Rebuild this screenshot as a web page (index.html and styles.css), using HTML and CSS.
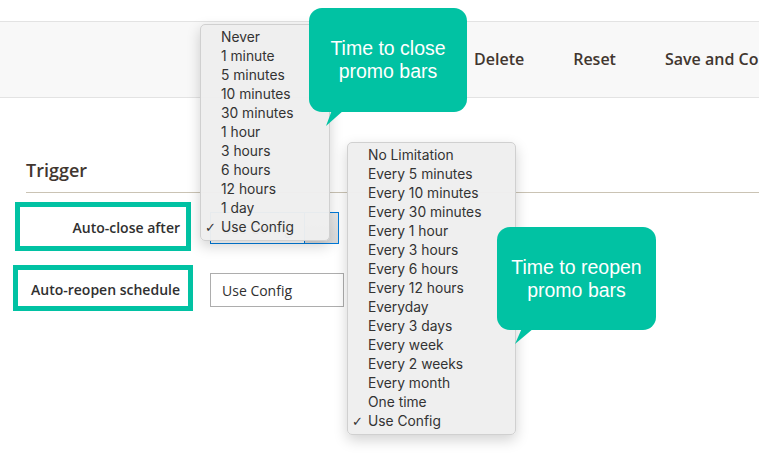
FILE: index.html
```html
<!DOCTYPE html>
<html lang="en">
<head>
<meta charset="utf-8">
<title>Trigger settings</title>
<link rel="stylesheet" href="styles.css">
</head>
<body>
<div class="page">
  <div class="toolbar">
    <span class="tb-btn">Delete</span>
    <span class="tb-btn">Reset</span>
    <span class="tb-btn">Save and Continue Edit</span>
  </div>

  <div class="section">
    <h2 class="legend">Trigger</h2>
    <div class="field field-close">
      <div class="label label-close">Auto-close after</div>
      <div class="select select-focus">
        <span class="select-value">Use Config</span>
        <span class="select-arrow"></span>
      </div>
    </div>
    <div class="field field-reopen">
      <div class="label label-reopen">Auto-reopen schedule</div>
      <div class="select select-plain">
        <span class="select-value">Use Config</span>
      </div>
    </div>
  </div>

  <ul class="menu menu-close">
    <li>Never</li>
    <li>1 minute</li>
    <li>5 minutes</li>
    <li>10 minutes</li>
    <li>30 minutes</li>
    <li>1 hour</li>
    <li>3 hours</li>
    <li>6 hours</li>
    <li>12 hours</li>
    <li>1 day</li>
    <li class="checked">Use Config</li>
  </ul>

  <ul class="menu menu-reopen">
    <li>No Limitation</li>
    <li>Every 5 minutes</li>
    <li>Every 10 minutes</li>
    <li>Every 30 minutes</li>
    <li>Every 1 hour</li>
    <li>Every 3 hours</li>
    <li>Every 6 hours</li>
    <li>Every 12 hours</li>
    <li>Everyday</li>
    <li>Every 3 days</li>
    <li>Every week</li>
    <li>Every 2 weeks</li>
    <li>Every month</li>
    <li>One time</li>
    <li class="checked">Use Config</li>
  </ul>

  <div class="bubble bubble-close">
    <span>Time to close<br>promo bars</span>
    <svg class="tail tail-close" width="40" height="30" viewBox="0 0 40 30"><polygon points="6,0 18,0 0,16"/></svg>
  </div>

  <div class="bubble bubble-reopen">
    <span>Time to reopen<br>promo bars</span>
    <svg class="tail tail-reopen" width="40" height="30" viewBox="0 0 40 30"><polygon points="7,0 19,0 0,16"/></svg>
  </div>
</div>
</body>
</html>
```
FILE: styles.css
```css
* { box-sizing: border-box; }

html, body {
  margin: 0;
  padding: 0;
  background: #ffffff;
}

body {
  font-family: "Open Sans", "Liberation Sans", sans-serif;
  color: #303030;
  width: 759px;
  height: 454px;
  overflow: hidden;
}

.page {
  position: relative;
  width: 759px;
  height: 454px;
  padding-top: 21px;
}

.toolbar {
  height: 77px;
  background: #f8f8f8;
  border-top: 1px solid #e3e3e3;
  border-bottom: 1px solid #e3e3e3;
  display: flex;
  align-items: center;
  gap: 49px;
  padding-left: 474px;
  padding-bottom: 2px;
  white-space: nowrap;
  overflow: hidden;
}

.tb-btn {
  font-size: 16px;
  font-weight: 600;
  color: #41362f;
}

.section {
  padding-top: 60px;
}

.legend {
  margin: 0 0 0 26px;
  font-size: 18px;
  font-weight: 600;
  line-height: 24px;
  color: #41362f;
  padding-bottom: 10px;
  border-bottom: 1px solid #cac3b4;
}

.field {
  display: flex;
  align-items: center;
}

.field-close {
  margin-top: 9px;
}

.field-reopen {
  margin-top: 14px;
}

.label {
  border: 5px solid #01c2a3;
  font-size: 14px;
  font-weight: 600;
  color: #303030;
  text-align: right;
  display: flex;
  align-items: center;
  justify-content: flex-end;
}

.label-close {
  margin-left: 15px;
  width: 176px;
  height: 49px;
  padding: 2px 6px 0 0;
  margin-right: 19px;
}

.label-reopen {
  margin-left: 13px;
  width: 180px;
  height: 46px;
  padding: 2px 8px 0 0;
  margin-right: 17px;
}

.select {
  display: flex;
  align-items: stretch;
  background: #fff;
  font-size: 14px;
}

.select-focus {
  width: 129px;
  height: 32px;
  border: 1px solid #007bdb;
  margin-top: 3px;
}

.select-plain {
  width: 134px;
  height: 34px;
  border: 1px solid #adadad;
  margin-top: 4px;
}

.select-value {
  flex: 1;
  padding-left: 11px;
  display: flex;
  align-items: center;
  color: #303030;
}

.select-arrow {
  width: 34px;
  background: linear-gradient(#e9e9e9, #dcdcdc);
  border-left: 1px solid #007bdb;
}

.menu {
  position: absolute;
  margin: 0;
  padding: 3px 0 5px;
  list-style: none;
  background: rgba(238, 238, 238, 0.97);
  border: 1px solid #d0d0d0;
  border-radius: 5px;
  box-shadow: 0 5px 14px rgba(0, 0, 0, 0.18);
  font-family: "Inter", "Liberation Sans", sans-serif;
  font-size: 13.8px;
  color: #333333;
}

.menu li {
  height: 19px;
  line-height: 19px;
  padding-left: 20px;
  position: relative;
  white-space: nowrap;
}

.menu li.checked::before {
  content: "\2713";
  position: absolute;
  left: 4px;
  top: 0;
  font-family: "DejaVu Sans", sans-serif;
  font-size: 13px;
}

.menu-close {
  left: 200px;
  top: 24px;
  width: 130px;
  height: 217px;
}

.menu-reopen {
  left: 347px;
  top: 142px;
  width: 169px;
  height: 293px;
}

.bubble {
  position: absolute;
  background: #01c2a3;
  border-radius: 13px;
  color: #ffffff;
  font-family: "Liberation Sans", Arial, sans-serif;
  font-size: 19.5px;
  line-height: 23px;
  text-align: center;
  display: flex;
  align-items: center;
  justify-content: center;
}

.bubble-close {
  left: 309px;
  top: 8px;
  width: 158px;
  height: 104px;
}

.bubble-reopen {
  left: 497px;
  top: 227px;
  width: 159px;
  height: 103px;
  padding-top: 1px;
}

.tail {
  position: absolute;
  fill: #01c2a3;
}

.tail-close {
  left: 17px;
  top: 102px;
}

.tail-reopen {
  left: 18px;
  top: 101px;
}
```
